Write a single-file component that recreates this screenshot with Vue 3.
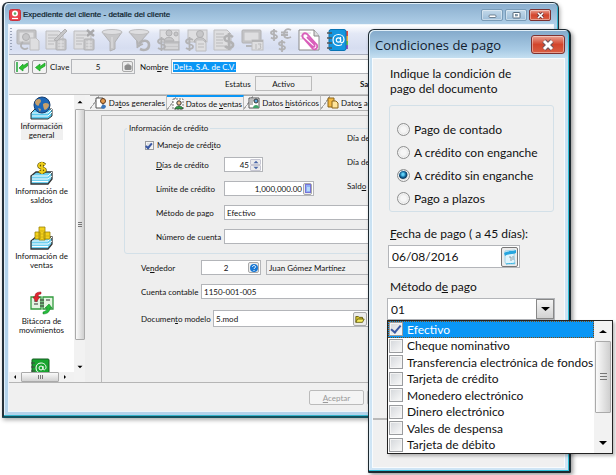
<script setup>
import { ref, onMounted } from 'vue'

const nombre = ref(null)
const clave = ref('5')
const nombreCliente = ref('Delta, S.A. de C.V.')
const manejoCredito = ref(true)
const dias = ref('45')
const limite = ref('1,000,000.00')
const metodo = ref('Efectivo')
const cuenta = ref('')
const vendedor = ref('2')
const contable = ref('1150-001-005')
const modelo = ref('5.mod')

const condiciones = ['Pago de contado', 'A crédito con enganche', 'A crédito sin enganche', 'Pago a plazos']
const condicion = ref('A crédito sin enganche')
const fecha = ref('06/08/2016')
const formas = [
  'Efectivo',
  'Cheque nominativo',
  'Transferencia electrónica de fondos',
  'Tarjeta de crédito',
  'Monedero electrónico',
  'Dinero electrónico',
  'Vales de despensa',
  'Tarjeta de débito'
]
const elegidas = ref(['Efectivo'])

onMounted(() => nombre.value.select())
</script>

<template>
  <div class="desktop">
    <main class="window main">
      <header class="titlebar">
        <svg class="app-icon" viewBox="0 0 12 12">
          <rect x="0.5" y="0.5" width="11" height="11" rx="2" fill="#e8414b" stroke="#c9303c" />
          <circle cx="6" cy="4.6" r="3" fill="#fff" />
          <circle cx="6" cy="4.6" r="1.3" fill="#5fae6b" />
          <path d="M3 9.5h6" stroke="#fff" stroke-width="1.2" />
        </svg>
        <h1>Expediente del cliente - detalle del cliente</h1>
        <button class="cap" aria-label="Minimizar"><svg viewBox="0 0 20 11"><rect x="7" y="5" width="7" height="2.5" rx="1" fill="#fff" stroke="#56697b" stroke-width="0.8" /></svg></button>
        <button class="cap" aria-label="Maximizar"><svg viewBox="0 0 20 11"><rect x="7" y="2.500" width="7" height="5.500" rx="0.500" fill="#fff" stroke="#56697b" /><rect x="9.500" y="4.500" width="2" height="1.500" fill="#7fa1bd" stroke="#56697b" stroke-width="0.5" /></svg></button>
        <button class="cap close" aria-label="Cerrar"><svg viewBox="0 0 20 11"><path d="M8 3l5 5M13 3l-5 5" stroke="#5b3038" stroke-width="3" /><path d="M8 3l5 5M13 3l-5 5" stroke="#fff" stroke-width="1.700" /></svg></button>
      </header>

      <div class="client">
        <nav class="toolbar">
          <i class="grip"></i>
          <button aria-label="Copiar imagen"><svg viewBox="0 0 24 24"><rect x="1" y="2" width="19" height="14" rx="1" class="g2" /><rect x="3" y="4" width="15" height="10" class="g1" /><circle cx="10" cy="9" r="3.500" class="g2" /><path d="M14 10h6l3 3v9h-9z" class="g1" /><path d="M7 14c-5 4 0 9 5 6" class="cur" /></svg></button>
          <button aria-label="Editar"><svg viewBox="0 0 24 24"><path d="M2 3h13l4 4v14H2z" class="g1" /><path d="M4 7h10M4 10h8M4 13h7M4 16h6" class="ln" /><rect x="12" y="11" width="10" height="11" rx="1" class="g2" /><path d="M14 14h6M14 17h6M14 20h6M17 12v9" class="wl" /><path d="M10 12L21 1l2 2-10 10z" class="g2" /></svg></button>
          <button aria-label="Eliminar"><svg viewBox="0 0 24 24"><path d="M2 3h13l4 4v14H2z" class="g1" /><path d="M4 7h10M4 10h8M4 13h7M4 16h6" class="ln" /><rect x="12" y="11" width="10" height="11" rx="1" class="g2" /><path d="M14 14h6M14 17h6M14 20h6M17 12v9" class="wl" /><path d="M15 2l7 6M22 2l-7 6" stroke="#a9a9ab" stroke-width="2.400" /></svg></button>
          <button aria-label="Filtrar"><svg viewBox="0 0 24 24"><path d="M2 4h20l-7 10v7l-5 2v-9z" class="g2" /><ellipse cx="12" cy="4" rx="10" ry="2.500" class="g1" /><path d="M12 9v11" class="wl" /></svg></button>
          <button aria-label="Quitar filtro"><svg viewBox="0 0 24 24"><path d="M1 4h20l-8 9v4l-4 3v-7z" class="g2" /><ellipse cx="11" cy="4" rx="10" ry="2.500" class="g1" /><path d="M9 13l1 5 5-2" class="cur" /><path d="M11 16c3-5 10-4 10 1s-5 6-9 4" class="cur big" /></svg></button>
          <button aria-label="Saldo del cliente"><svg viewBox="0 0 24 24"><rect x="4" y="2" width="19" height="12" class="g1" /><circle cx="13" cy="5" r="3" class="g2" /><circle cx="20" cy="6" r="2" class="g2" /><path d="M8 13c1-5 9-5 10 0z" class="g2" /><rect x="8" y="14" width="15" height="8" class="g2" /><path d="M9 17h13M9 20h13" class="wl" /><path d="M9 12c-3-2-7-1-7 1.500 0 3 7 2 7 5 0 2.500-4 3.500-7 1.500M5.500 9v14" class="cur" /></svg></button>
          <button aria-label="Pagos del cliente"><svg viewBox="0 0 24 24"><rect x="4" y="2" width="19" height="12" class="g1" /><circle cx="16" cy="6" r="3.500" class="g2" /><path d="M10 14c1-6 11-6 12 0z" class="g2" /><path d="M12 12h7l3 3v8H12z" class="g1" /><path d="M14 16h6M14 19h6" class="ln" /><path d="M9 12c-3-2-7-1-7 1.500 0 3 7 2 7 5 0 2.500-4 3.500-7 1.500M5.500 9v14" class="cur" /></svg></button>
          <button aria-label="Estado de cuenta"><svg viewBox="0 0 24 24"><path d="M2 2h13l4 4v16H2z" class="g1" /><path d="M4 6h8M4 9h8M4 12h7M4 15h7M4 18h9" class="ln" /><path d="M21 9c-4-3-10-1-8 3 1 2 7 1 8 4 1 4-5 5-8 2M17 5v17" class="cur big" /></svg></button>
          <button aria-label="Agenda"><svg viewBox="0 0 24 24"><rect x="2" y="2" width="19" height="13" rx="1" class="g2" /><rect x="4" y="4" width="15" height="9" class="g1" /><path d="M6 18h7" class="cur" /><rect x="12" y="12" width="11" height="10" class="g1" /><path d="M12 13h11" class="cur" /><path d="M16 16v5M18 16h3l-1 2 1 1-1 2h-2" class="ln" /></svg></button>
          <button aria-label="Monedas"><svg viewBox="0 0 24 24"><path d="M9 4c-2-2-6-1-6 1s6 1 6 3.500-4 2.500-6 1M6 1v12" class="cur" /><path d="M23 2c-4-2-7 0-7 4s3 5 7 3M13 4.500h7M13 7h7" class="cur" /><path d="M17 15c-2-2-6-1-6 1s6 1 6 3.500-4 2.500-6 1M14 12v12" class="cur" /></svg></button>
          <button class="wide" aria-label="Adjuntar"><svg viewBox="0 0 24 24"><path d="M2 2h15l5 6v14H2z" fill="#fff" stroke="#888" /><path d="M17 2v6h5" fill="#ddd" stroke="#888" /><path d="M3 5h11M3 8h4M3 11h3" stroke="#ccc" stroke-width="0.800" /><path d="M8 12l8 9c3 1 5-1 4-4L10 6C7 4 4 7 6 10l10 9c2 0 2-1 1-3l-7-7" fill="none" stroke="#d95fba" stroke-width="1.800" /></svg></button>
          <button class="wide" aria-label="Directorio"><svg viewBox="0 0 24 24"><path d="M18 3h4v5h-4z" fill="#e94a3a" /><path d="M18 8h4v5h-4z" fill="#f4b23a" /><path d="M18 13h4v4h-4z" fill="#72bf44" /><path d="M18 17h4v4h-4z" fill="#974bb5" /><rect x="3" y="1.500" width="17" height="21" rx="2" fill="#1596df" stroke="#0874b4" /><path d="M1 5h5M1 10h5M1 15h5M1 20h5" stroke="#555" stroke-width="1.500" /><path d="M14.500 9v4c0 3 3.500 2 3.500-1.500 0-3-2.500-5-5.500-5S7 8.500 7 12s2.500 5.500 5.500 5.500c1.500 0 2.500-.5 3.500-1" fill="none" stroke="#fff" stroke-width="1.200" /><circle cx="12.500" cy="12" r="2.200" fill="none" stroke="#fff" stroke-width="1.200" /></svg></button>
        </nav>

        <section class="head">
          <div class="line">
            <button class="sq first" aria-label="Primero"><svg viewBox="0 0 12 12"><path d="M1 1v10" stroke="#22a63a" stroke-width="1.500" /><path d="M11.500 2v3L7 8v2L3 7l4-4v2z" fill="#2fc32f" stroke="#159b25" stroke-width="0.700" /></svg></button>
            <button class="sq" aria-label="Anterior"><svg viewBox="0 0 12 12"><path d="M11 2v3L6 8v2L1.500 6.500 6 3v2.500z" fill="#2fc32f" stroke="#159b25" stroke-width="0.700" /></svg></button>
            <label for="clave" class="lclave">Clave</label>
            <span class="field gray clave"><input id="clave" v-model="clave" /><button aria-label="Buscar clave"><svg viewBox="0 0 10 10"><rect x="1.500" y="3" width="7" height="5" rx="1.500" fill="#8c8c8c" /><path d="M3 3c1-2 3-2 4 0" fill="#aaa" /></svg></button></span>
            <label for="nombre" class="lnombre">Nom<u>b</u>re</label>
            <span class="field name grow"><input id="nombre" ref="nombre" v-model="nombreCliente" /></span>
          </div>
          <div class="line status">
            <span>Estatus</span><output>Activo</output><b>Saldo</b>
          </div>
        </section>

        <div class="body">
          <aside>
            <div class="items">
              <a href="#general" class="item on">
                <svg viewBox="0 0 24 24"><path d="M1 17l4-4h17v7l-4 3H1z" fill="#59c9ee" stroke="#333" /><path d="M2 17h16l4-4M2 20h16l4-4" fill="none" stroke="#fff" /><circle cx="12" cy="9" r="8" fill="#1e68b8" stroke="#163d6d" /><path d="M6 4c3-2 5-1 5 1s-2 2-2 4-4 0-4-3zM13 8c2-2 6-1 6 1s-3 5-4 5-2-4-2-6zM8 12l3 1-1 3z" fill="#c8a06a" /></svg>
                <span>Información<br>general</span>
              </a>
              <a href="#saldos" class="item">
                <svg viewBox="0 0 24 24"><path d="M1 15l5-4h16v7l-4 5H1z" fill="#6fd0f0" stroke="#333" stroke-width="1.300" /><path d="M2 15h16l4-4M2 18h16l4-3M2 20.500h16" fill="none" stroke="#fff" /><path d="M15 4c-3-3-7-1-6 1.500 1 2 5 1 6 3 1 3-4 3.500-6 1.500M12 1v12" fill="none" stroke="#5f5305" stroke-width="3.200" /><path d="M15 4c-3-3-7-1-6 1.500 1 2 5 1 6 3 1 3-4 3.500-6 1.500M12 1v12" fill="none" stroke="#f0cf1b" stroke-width="1.800" /></svg>
                <span>Información de<br>saldos</span>
              </a>
              <a href="#ventas" class="item">
                <svg viewBox="0 0 24 24"><path d="M1 15l5-4h16v7l-4 5H1z" fill="#6fd0f0" stroke="#333" stroke-width="1.300" /><path d="M2 15h16l4-4M2 18h16l4-3M2 20.500h16" fill="none" stroke="#fff" /><path d="M5 6h5v7H5zM14 6h6v7h-6zM9 1h6v13H9z" fill="#f3d11c" stroke="#9b8409" stroke-width="0.800" /><path d="M9 5h6M9 8h6M9 11h6M5 10h4M15 10h4" stroke="#c9a80e" stroke-width="0.700" /></svg>
                <span>Información de<br>ventas</span>
              </a>
              <a href="#bitacora" class="item">
                <svg viewBox="0 0 24 24"><path d="M1 6h10v12H1zM13 6h10v12H13z" fill="#e4f5e2" stroke="#319a3d" stroke-width="1.300" /><path d="M10 9h4M10 12h4M10 15h4M4 10h4M4 13h4M16 9h4" stroke="#333" /><path d="M11 1C5 1 5 4 5 6H3l3 5 4-5H8c0-2 1-3 3-3z" fill="#e02630" stroke="#8d121b" stroke-width="0.500" /><path d="M13 23c6 0 7-4 7-6h2l-3-4-4 4h2c0 2-1 3-4 4z" fill="#25bd3b" stroke="#0f7a20" stroke-width="0.500" /></svg>
                <span>Bitácora de<br>movimientos</span>
              </a>
              <a href="#directorio" class="item" aria-label="Directorio">
                <svg viewBox="0 0 24 24"><rect x="2" y="3" width="17" height="20" rx="1" fill="#18a52f" stroke="#145a20" /><path d="M1 7h4M1 11h4M1 15h4" stroke="#444" /><circle cx="11" cy="12" r="2" fill="none" stroke="#fff" /><path d="M13 10v3c1 2 3 0 3-1.500C16 8 13 7 11 7c-3 0-5 2-5 5s2 5 5 5" fill="none" stroke="#fff" /><path d="M13 17h10v4H13z" fill="#8a4b22" /></svg>
              </a>
            </div>
            <div class="hbar"><svg viewBox="0 0 8 8"><path d="M5 2v4L3 4z" /></svg><i><b></b></i><svg viewBox="0 0 8 8"><path d="M3 2v4l2-2z" /></svg></div>
          </aside>
          <div class="vbar"><svg viewBox="0 0 8 8"><path d="M2 5h4L4 3z" /></svg><i><b></b></i><svg viewBox="0 0 8 8"><path d="M2 3h4L4 5z" /></svg></div>

          <section class="content">
            <div class="tabs" role="tablist">
              <button role="tab"><svg viewBox="0 0 12 12"><path d="M1 1h7v10H1z" fill="#fff" stroke="#555" /><circle cx="8" cy="4" r="2.500" fill="#e59a4c" stroke="#5f3a1e" /><path d="M6 11c0-4 5-4 5-1l-2 2z" fill="#3b77bd" /></svg><span>Da<u>t</u>os generales</span></button>
              <button role="tab" class="on" aria-selected="true"><svg viewBox="0 0 12 12"><path d="M1 1h10v10H1z" fill="#fff" stroke="#777" stroke-dasharray="2 1" /><circle cx="7" cy="5" r="2.200" fill="#f0c08f" stroke="#333" /><path d="M3 11c0-4 8-4 8 0z" fill="#2f9a45" stroke="#222" stroke-width="0.500" /></svg><span>Datos de <u>v</u>entas</span></button>
              <button role="tab"><svg viewBox="0 0 12 12"><path d="M1 1h10v10H1z" fill="#fff" stroke="#555" /><path d="M2 3h4M2 5h3M2 7h3" stroke="#777" /><circle cx="8" cy="4" r="2" fill="#5fa7d9" stroke="#333" /><path d="M5 11c0-4 6-4 6 0z" fill="#3fa268" /></svg><span>Datos <u>h</u>istóricos</span></button>
              <button role="tab" class="last"><svg viewBox="0 0 12 12"><path d="M1 1h6v9H1z" fill="#f4b942" stroke="#8a641a" /><path d="M5 4h4l2 2v5H5z" fill="#ffe59a" stroke="#8a641a" /></svg><span>Dato<u>s</u> adicionales</span></button>
            </div>
            <div class="sheet">
              <fieldset>
                <legend>Información de crédito</legend>
                <label class="check"><input v-model="manejoCredito" type="checkbox" /><span>Manejo de créd<u>i</u>to</span></label>
                <div class="row"><label for="dias"><u>D</u>ías de crédito</label><span class="field dias"><input id="dias" v-model="dias" /><span class="spin"><button aria-label="Más"><svg viewBox="0 0 8 4"><path d="M2 3h4L4 1z" /></svg></button><button aria-label="Menos"><svg viewBox="0 0 8 4"><path d="M2 1h4L4 3z" /></svg></button></span></span></div>
                <div class="row"><label for="limite">Límite de crédito</label><span class="field limite"><input id="limite" v-model="limite" /><button aria-label="Calculadora"><svg viewBox="0 0 8 11"><rect x="1.500" y="1.500" width="5" height="8" fill="#8fb0f4" stroke="#7673d8" /><path d="M3 5h3M3 7h3" stroke="#dff" /></svg></button></span></div>
                <div class="row"><label for="metodo">Método de pago</label><span class="field grow"><input id="metodo" v-model="metodo" /></span></div>
                <div class="row"><label for="cuenta">Número de cuenta</label><span class="field grow"><input id="cuenta" v-model="cuenta" /></span></div>
                <div class="side"><span>Día de revisión</span><span>Día de pago</span><span>Sald<u>o</u></span></div>
              </fieldset>
              <div class="row out"><label class="lv" for="vendedor">Ve<u>n</u>dedor</label><span class="field vend"><input id="vendedor" v-model="vendedor" /><button aria-label="Buscar vendedor"><svg viewBox="0 0 10 10"><circle cx="5" cy="5" r="4" fill="#1978d4" /><path d="M3.500 4c0-2 3-2 3 0 0 1-1.500 1-1.500 2M5 7v1" fill="none" stroke="#fff" /></svg></button></span><span class="field gray grow"><input aria-label="Nombre del vendedor" readonly value="Juan Gómez Martínez" /></span></div>
              <div class="row out"><label class="lv" for="contable">Cuenta contable</label><span class="field grow"><input id="contable" v-model="contable" /></span></div>
              <div class="row out doc"><label class="lm" for="modelo">Documen<u>t</u>o modelo</label><span class="field modelo"><input id="modelo" v-model="modelo" /><button aria-label="Abrir"><svg viewBox="0 0 12 12"><path d="M1 10V3h3l1 1h4v2" fill="#d9c531" stroke="#5c5509" /><path d="M1 10l2-4h8l-2 4z" fill="#f6ed5f" stroke="#5c5509" /></svg></button></span></div>
            </div>
          </section>
        </div>
        <footer><button disabled><span><u>A</u>ceptar</span></button><button aria-label="Cancelar"></button></footer>
      </div>
    </main>

    <section class="window dialog" role="dialog" aria-labelledby="dlg-title">
      <header class="titlebar">
        <h2 id="dlg-title">Condiciones de pago</h2>
        <button class="cap close" aria-label="Cerrar"><svg viewBox="0 0 32 16"><path d="M12 4l8 8M20 4l-8 8" stroke="#6d555b" stroke-width="5" /><path d="M12 4l8 8M20 4l-8 8" stroke="#fff" stroke-width="3" /></svg></button>
      </header>
      <div class="client">
        <p>Indique la condición de<br>pago del documento</p>
        <fieldset>
          <label v-for="c in condiciones" :key="c"><input v-model="condicion" type="radio" name="condicion" :value="c" />{{ c }}</label>
        </fieldset>
        <label class="cap-label" for="fecha"><u>F</u>echa de pago ( a 45 días):</label>
        <span class="field fecha"><input id="fecha" v-model="fecha" /><button aria-label="Calendario"><svg viewBox="0 0 16 18"><path d="M3 3l10-1-1 5 1 9H4l-1-2z" fill="#dff4fc" stroke="#8ccbe6" stroke-width="0.800" /><path d="M2 5c4-3 8-1 12-3v3c-4 2-8 0-11 3z" fill="#25a5df" /><path d="M7 9h2v4M11 8v4" fill="none" stroke="#7b8b95" stroke-width="0.800" /><path d="M4 16c3-1 6 0 9-1" fill="none" stroke="#3cb3e0" /></svg></button></span>
        <label class="cap-label" for="forma">Método d<u>e</u> pago</label>
        <div class="combo">
          <select id="forma"><option>01</option></select>
          <svg viewBox="0 0 16 18"><path d="M4 7h9l-4.500 4z" /></svg>
          <div class="popup">
            <div class="options">
              <label v-for="(f, i) in formas" :key="f" :class="{ on: i === 0 }"><input v-model="elegidas" type="checkbox" :value="f" />{{ f }}</label>
            </div>
            <div class="vbar big"><svg viewBox="0 0 16 16"><path d="M4 10h8L8 7z" /></svg><i><b></b></i><svg viewBox="0 0 16 16"><path d="M4 6h8l-4 4z" /></svg></div>
          </div>
        </div>
        <div class="base"></div>
      </div>
    </section>
  </div>
</template>

<style>
body { margin: 0; background: #fff; }
</style>

<style scoped>
* { box-sizing: border-box; }
.desktop { position: relative; min-height: 100vh; overflow: hidden; font: 8px/10px Lato, "Liberation Sans", sans-serif; color: #111; }
button, input, select { font: inherit; color: inherit; margin: 0; padding: 0; }
button { background: none; border: 0; display: flex; align-items: center; justify-content: center; }
svg { display: block; flex: none; }
input { background: none; border: 0; outline: 0; min-width: 0; width: 100%; }
h1, h2, p { margin: 0; font-weight: 400; }
fieldset { margin: 0; min-width: 0; padding: 0; border: 1px solid #d3e0e8; border-radius: 3px; }
input::selection { background: #0a96f5; color: #fff; }

.window { position: absolute; border: 1px solid #25313a; border-radius: 6px 6px 1px 1px; background: #b4d3eb; }
.main { left: 2px; top: 2px; right: 57px; border-width: 1px 1px 2px 2px; padding: 0 4px 4px; border-bottom-color: #14525f; box-shadow: inset -1px -1px #35b4cc, inset 1px 1px #e1eff8, 1px 2px 4px #0005; background: linear-gradient(#89adcd, #b4d3eb 24px); }
.titlebar { display: flex; align-items: center; }
.main .titlebar { height: 21px; padding: 3px 3px 0 1px; gap: 2px; }
.app-icon { width: 12px; height: 12px; }
h1 { flex: 1; font: 8px/12px "Liberation Sans", Arial, sans-serif; color: #0b1a28; -webkit-text-stroke: 0.2px #0b1a28; }
.cap { width: 22px; height: 12px; border: 1px solid #7a9cb8; border-radius: 2px; background: linear-gradient(#c3d9ea, #9dbdd8); box-shadow: inset 0 0 0 1px #fff6; }
.cap svg { width: 20px; height: 11px; }
.cap.close { border-color: #7d3130; background: linear-gradient(#eaa394, #d3452c 50%, #d95f44); }
.main .client { background: #f0f0f0; border: 1px solid #eef5fb; }

.toolbar { height: 30px; display: flex; align-items: center; gap: 4px; padding-left: 1px; border-bottom: 1px solid #a9aebc; background: linear-gradient(#fff, #e3e8f6 30%, #d6ddf0 80%, #dfe5f5); }
.toolbar svg { width: 24px; height: 24px; }
.toolbar .wide { margin-left: 1px; }
.grip { width: 2px; height: 24px; background: repeating-linear-gradient(#9aa3b8 0 1px, transparent 1px 3px); }
.g1 { fill: #dedee0; stroke: #bebec0; }
.g2 { fill: #c6c6c8; stroke: #b0b0b2; }
.ln { fill: none; stroke: #bababc; stroke-width: 1; }
.wl { fill: none; stroke: #e2e2e4; stroke-width: 1; }
.cur { fill: none; stroke: #b2b2b4; stroke-width: 1.8; }
.cur.big { stroke-width: 2.6; }

.head { display: grid; gap: 2px; padding: 4px 0 3px 5px; border-bottom: 1px solid #c4c4c4; }
.line { display: flex; align-items: center; height: 15px; }
.sq { width: 15px; height: 14px; border: 1px solid #9c9c9c; border-radius: 2px; background: #f3f3f3; margin-right: 3px; }
.sq svg { width: 12px; height: 12px; }
.field { display: flex; align-items: center; height: 15px; background: #fff; border: 1px solid #b3b5b9; padding-left: 2px; }
.field.gray { background: #f0f0f0; }
.grow { flex: 1; }
.field button { flex: none; width: 11px; height: 11px; border: 1px solid #a9a9a9; border-radius: 2px; background: #ececec; margin-right: 1px; }
.field button svg { width: 10px; height: 10px; }
.lclave { width: 21px; }
.clave { width: 64px; }
.clave input { text-align: center; }
.name { padding-left: 1px; }
.lnombre { padding: 0 3px 0 5px; width: 36px; }
.status { padding-left: 211px; }
.status span { width: 25px; }
.status output { width: 57px; height: 15px; border: 1px solid #bbb; text-align: center; line-height: 14px; margin: 0 48px 0 5px; }

.body { display: flex; border-bottom: 1px solid #b5b5b5; }
aside { width: 65px; background: #fff; display: flex; flex-direction: column; }
.items { flex: 1 1 0; min-height: 0; overflow: hidden; }
.item { display: flex; flex-direction: column; align-items: center; height: 65px; padding-top: 1px; gap: 2px; color: inherit; text-decoration: none; text-align: center; line-height: 9px; white-space: nowrap; }
.item svg { width: 24px; height: 24px; }
.item.on span { background: #f0f0f0; }
.hbar { display: flex; height: 10px; background: #f1f1f1; align-items: center; }
.hbar svg { width: 12px; height: 8px; }
.hbar i { width: 38px; height: 10px; border: 1px solid #aaa; border-radius: 1px; background: linear-gradient(#fafafa, #d2d2d2); display: flex; align-items: center; justify-content: center; }
.hbar b { width: 5px; height: 4px; background: repeating-linear-gradient(90deg, #777 0 1px, transparent 1px 2px); }
.vbar { width: 11px; background: #f2f2f2; display: flex; flex: none; flex-direction: column; align-items: center; padding-bottom: 8px; }
.vbar svg { width: 10px; height: 14px; }
.vbar i { flex: 1; width: 10px; border: 1px solid #aaa; border-radius: 1px; background: linear-gradient(90deg, #fafafa, #cfcfcf); display: flex; align-items: center; justify-content: center; margin-bottom: 20px; }
.vbar b { width: 4px; height: 6px; background: repeating-linear-gradient(#777 0 1px, transparent 1px 2px); }

.content { flex: 1; min-width: 0; background: #eee; }
.tabs { display: flex; height: 16px; border-bottom: 1px solid #b2b2b2; background: #f3f3f3; padding-left: 5px; }
.tabs button { flex: none; width: 77px; padding-right: 1px; gap: 2px; justify-content: flex-end; height: 15px; white-space: nowrap; border-top: 1px solid #aaa; border-right: 1px solid #bbb; background: linear-gradient(125deg, transparent 0 7px, #a8a8a8 7px 8px, #f0f0f0 8px); }
.tabs button.on { border-top: 2px solid #0a96f5; }
.tabs button.last { width: 86px; justify-content: flex-start; padding-left: 6px; }
.tabs svg { width: 12px; height: 12px; }
.sheet { margin: 4px 0 0 16px; border: 1px solid #bababa; border-bottom: 0; border-right: 0; padding: 7px 0 55px 22px; }
.sheet fieldset { position: relative; padding: 2px 0 0 20px; margin-bottom: 6px; }
legend { padding: 0 2px; margin-left: -18px; line-height: 10px; }
.check { display: flex; align-items: center; height: 20px; gap: 3px; margin-bottom: 2px; }
.check input { width: 9px; height: 9px; }
.row { display: flex; align-items: center; height: 15px; margin-bottom: 9px; }
.row label { width: 79px; padding-left: 11px; white-space: nowrap; }
.row label + .field { flex-shrink: 0; }
.row label + .grow { flex-shrink: 1; }
.dias { width: 39px; }
.dias input, .limite input { text-align: right; }
.limite { width: 90px; }
.limite button { width: 9px; height: 12px; margin-left: 1px; }
.limite button svg { width: 8px; height: 11px; }
.spin { display: grid; margin-left: 1px; }
.spin button { width: 11px; height: 6px; border-color: #c6c6d2; border-radius: 1px; }
.spin svg { width: 8px; height: 4px; fill: #4a67a8; }
.side { position: absolute; left: 222px; top: 0; white-space: nowrap; display: grid; row-gap: 14px; }
.out { padding-left: 17px; }
.row .lv { width: 60px; padding: 0; }
.row .lm { width: 72px; padding: 0; }
.sheet .doc { height: 17px; margin: 11px 0 0; }
.vend { width: 60px; margin-right: 5px; }
.vend input { text-align: center; }
.modelo { width: 156px; height: 17px; }
.modelo button { width: 14px; height: 14px; }
footer { display: flex; gap: 3px; height: 28px; padding: 7px 0 0 300px; }
footer button { width: 55px; height: 15px; border: 1px solid #bbb; border-radius: 2px; background: #f4f4f4; color: #222; }
footer button:disabled { color: #999; }

.dialog { left: 368px; top: 29px; width: 203px; padding: 0 4px 3px 3px; border: 1px solid #1d2930; border-width: 1px 2px 2px 1px; box-shadow: inset -1px -1px #2bc0d8, inset 1px 1px #e1eff8, 2px 2px 4px #0006; background: linear-gradient(#83a9ca, #a9cbe5 20px, #c5dff1 28px, #cfe5f5); font-size: 12px; line-height: 15px; }
.dialog .titlebar { height: 28px; padding: 1px 0 0 3px; justify-content: space-between; }
h2 { font: 13px/18px "Open Sans", "Noto Sans", sans-serif; color: #12202e; }
.dialog .cap { width: 34px; height: 19px; border-radius: 3px; }
.dialog .cap svg { width: 32px; height: 16px; }
.dialog .client { background: #f0f0f0; border: 1px solid #f8fbfd; padding: 7px 9px 0 14px; }
.dialog p { padding-left: 3px; }
.dialog fieldset { margin: 9px 1px 14px 2px; padding: 12px 0 1px 7px; }
.dialog fieldset label { display: flex; align-items: center; gap: 4px; height: 23px; }
input[type=radio] { appearance: none; flex: none; width: 13px; height: 13px; border: 1px solid #8e8f8f; border-radius: 50%; background: radial-gradient(#f6f6f6 35%, #c9c9c9); box-shadow: inset 0 0 0 1px #f4f4f4; }
input[type=radio]:checked { background: radial-gradient(circle at 45% 40%, #5fd0f7 0 1px, #0c5f94 3px, #0c3d63 4px, #e0e0e0 5px); }
input[type=checkbox] { appearance: none; flex: none; border: 1px solid #9a9c9f; background: linear-gradient(135deg, #d3d6da, #fafafa); box-shadow: inset 0 0 0 1px #f4f4f4; }
input[type=checkbox]:checked::before { content: ""; display: block; width: 30%; height: 65%; margin: 0 auto; border: solid #3a58a4; border-width: 0 2px 2px 0; transform: rotate(40deg); }
.cap-label { display: block; padding-left: 3px; margin-bottom: 4px; }
.fecha { width: 132px; height: 23px; margin-bottom: 11px; padding-left: 3px; margin-left: 1px; }
.fecha button { width: 17px; height: 20px; border-color: #777; }
.fecha button svg { width: 16px; height: 18px; }
.combo { position: relative; display: flex; }
.combo select { appearance: none; width: 100%; height: 22px; border: 1px solid #b3b5b9; border-radius: 0; background: #fff; padding-left: 3px; outline: 0; }
.combo > svg { position: absolute; right: 1px; top: 1px; width: 18px; height: 20px; border: 1px solid #888; background: linear-gradient(#f4f4f4, #d2d2d2); }
.popup { position: absolute; left: 0; top: 22px; width: 226px; height: 134px; display: flex; background: #fff; border: 1px solid #222; box-shadow: 2px 2px 3px #0004; }
.options { flex: 1; min-width: 0; display: grid; grid-auto-rows: 1fr; }
.options label { display: flex; align-items: center; gap: 4px; padding-left: 1px; white-space: nowrap; min-height: 0; min-width: 0; }
.options input { width: 14px; height: 14px; }
.options .on { background: #0a96f5; color: #fff; outline: 1px dotted #7a4a12; outline-offset: -1px; }
.vbar.big { width: 18px; padding: 0; }
.vbar.big svg { width: 16px; height: 20px; }
.vbar.big i { width: 16px; }
.vbar.big b { width: 7px; height: 9px; background: repeating-linear-gradient(#777 0 1px, transparent 1px 3px); }
.base { height: 49px; margin: 98px -9px 0 -14px; border-top: 2px solid #b9b9b9; }
</style>
